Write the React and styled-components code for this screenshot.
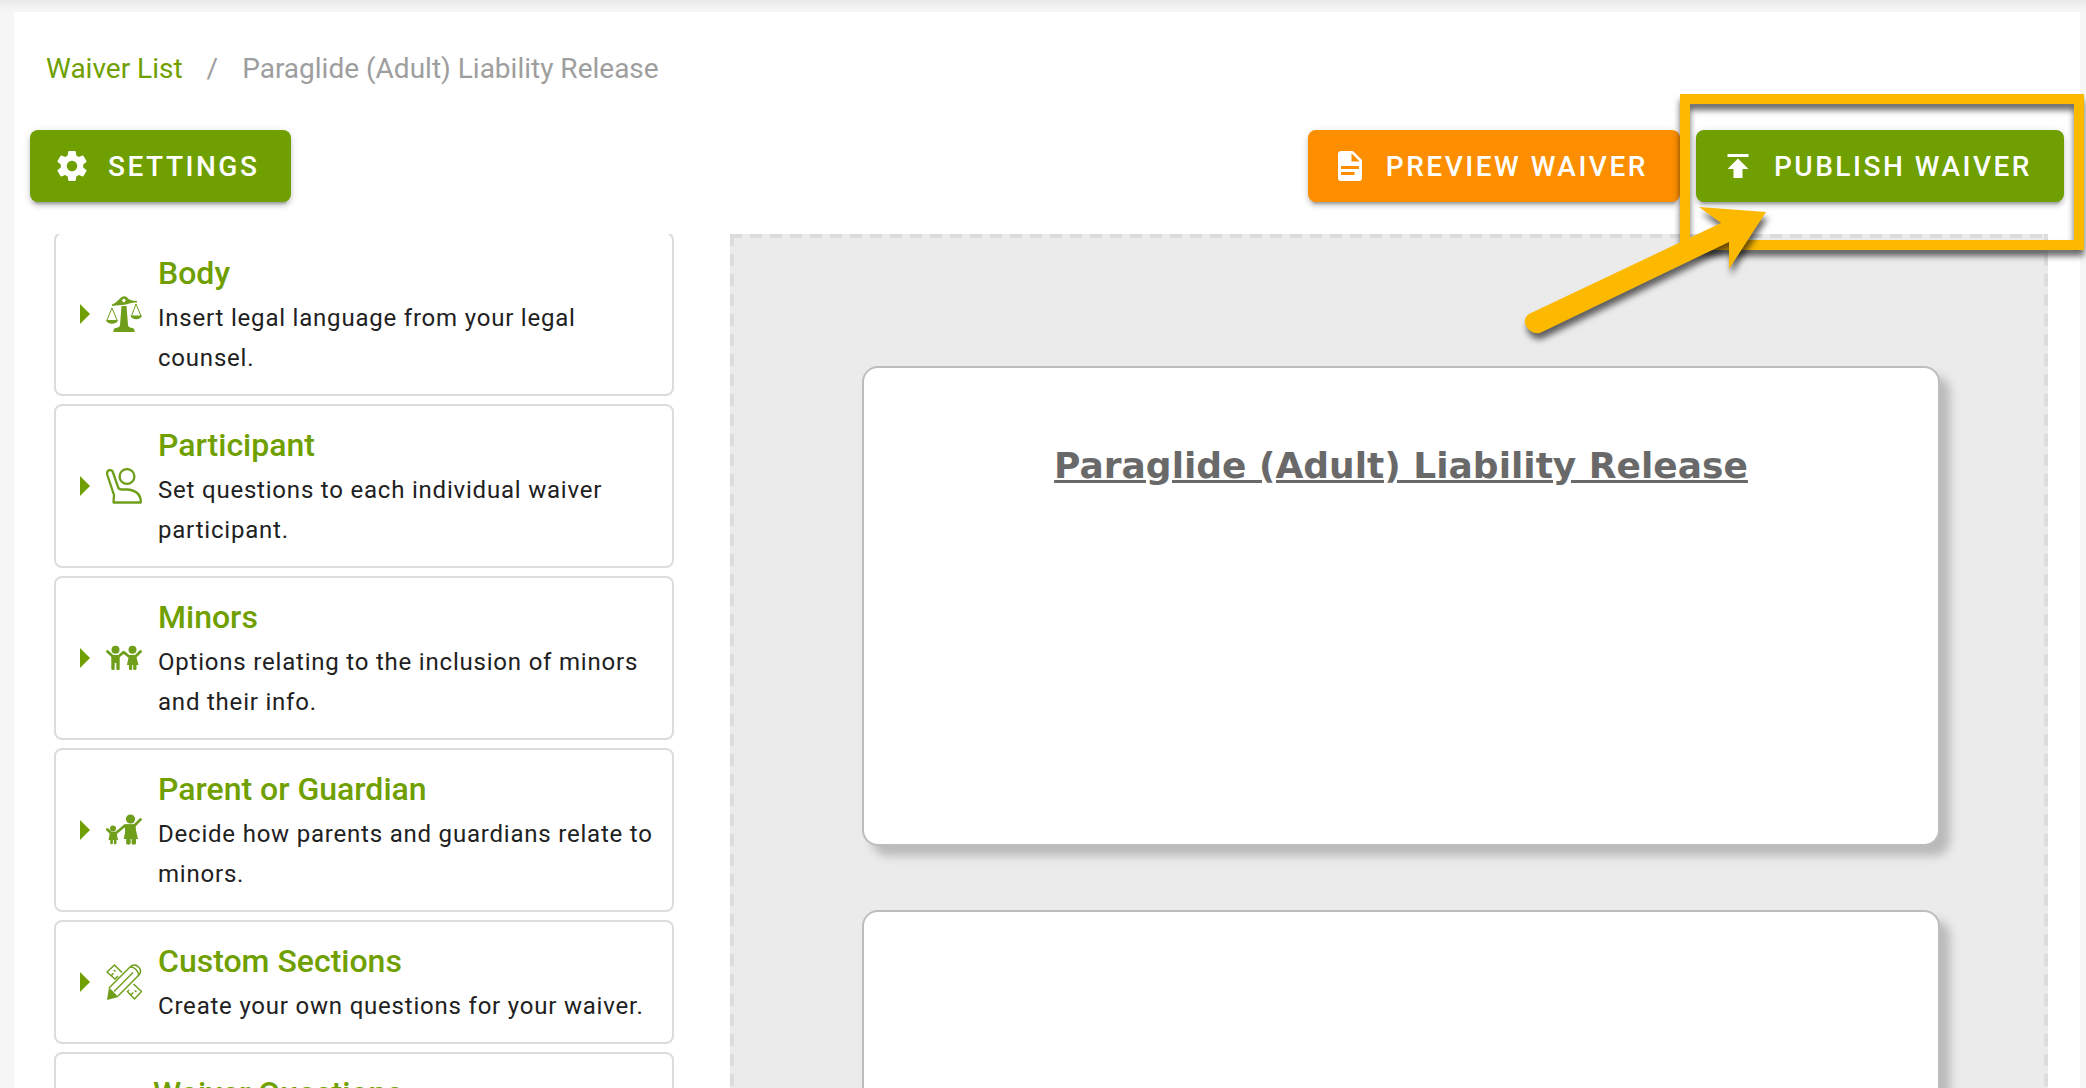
import React from "react";
import styled, { createGlobalStyle } from "styled-components";

const GREEN = "#6f9f00";
const ICON_GREEN = "#6f9e1b";
const AMBER = "#fcb900";

const GlobalStyle = createGlobalStyle`
  *, *::before, *::after { box-sizing: border-box; }
  html, body, #root { height: 100%; }
  body {
    margin: 0;
    overflow: hidden;
    background: #f6f6f6;
    color: #212121;
    font-family: Roboto, "Liberation Sans", sans-serif;
  }
  h1, h2, p, ol, ul { margin: 0; padding: 0; font-weight: 400; }
`;

const Shell = styled.div`
  height: 100%;
  padding: 12px 6px 0 14px;
  background: linear-gradient(#e8e8e8, #f6f6f6 10px);
`;

const Panel = styled.main`
  height: 100%;
  display: flex;
  flex-direction: column;
  background: #fff;
`;

const Breadcrumbs = styled.nav`
  padding: 37px 32px 0;

  ol {
    display: flex;
    gap: 24px;
    list-style: none;
    font-size: 28px;
    line-height: 40px;
    color: #9e9e9e;
  }
  a {
    color: ${GREEN};
    text-decoration: none;
  }
`;

const Toolbar = styled.div`
  display: flex;
  gap: 16px;
  padding: 41px 16px 32px;
`;

const Spacer = styled.div`
  flex: 1;
`;

const Button = styled.button`
  display: flex;
  align-items: center;
  gap: 18px;
  height: 72px;
  padding: 0 32px 0 24px;
  border: 0;
  border-radius: 8px;
  background: ${(p) => p.$color};
  color: #fff;
  font: 500 28px/40px Roboto, "Liberation Sans", sans-serif;
  letter-spacing: 0.09em;
  text-transform: uppercase;
  cursor: pointer;
  box-shadow: 0 6px 2px -4px rgba(0, 0, 0, 0.2), 0 4px 4px rgba(0, 0, 0, 0.14),
    0 2px 10px rgba(0, 0, 0, 0.12);

  svg {
    width: 36px;
    height: 36px;
    fill: currentColor;
  }
`;

const ButtonLabel = styled.span`
  padding-top: 2px;
`;

const Workspace = styled.div`
  flex: 1;
  min-height: 0;
  display: flex;
  gap: 56px;
  padding: 0 32px 0 40px;
`;

const Sections = styled.ul`
  flex: 0 0 620px;
  display: flex;
  flex-direction: column;
  justify-content: flex-start;
  gap: 8px;
  overflow: hidden;
  list-style: none;
`;

const SectionCard = styled.li`
  flex: none;
  border: 2px solid #dcdcdc;
  border-radius: 8px;
  ${(p) => p.$scrolled && "margin-top: -2px;"}
`;

const SectionToggle = styled.button`
  display: flex;
  align-items: center;
  gap: 16px;
  width: 100%;
  padding: 16px 16px 16px 24px;
  border: 0;
  background: none;
  color: inherit;
  font: inherit;
  text-align: left;
  cursor: pointer;
`;

const Caret = styled.span`
  flex: none;
  border: solid transparent;
  border-width: 10px 0 10px 10px;
  border-left-color: ${GREEN};
`;

const SectionIcon = styled.svg`
  flex: none;
  width: ${(p) => p.$size}px;
  height: ${(p) => p.$size}px;
  fill: ${ICON_GREEN};
  stroke: ${ICON_GREEN};
  stroke-width: 0;
`;

const SectionTitle = styled.span`
  display: block;
  padding-bottom: 2px;
  color: ${GREEN};
  font-size: 32px;
  font-weight: 500;
  line-height: 46px;
`;

const SectionText = styled.span`
  display: block;
  font-size: 24px;
  line-height: 40px;
  letter-spacing: 0.033em;
`;

const dashX = "repeating-linear-gradient(90deg, #dcdcdc 0 12px, transparent 12px 20px)";
const dashY = "repeating-linear-gradient(#dcdcdc 0 12px, transparent 12px 20px)";

const Preview = styled.section`
  flex: 1;
  min-width: 0;
  display: flex;
  flex-direction: column;
  gap: 64px;
  padding: 132px 108px 0 132px;
  overflow: hidden;
  background: ${dashX} top / 100% 4px no-repeat, ${dashY} left / 4px 100% no-repeat,
    ${dashY} right / 4px 100% no-repeat, #ebebeb;
`;

const Sheet = styled.article`
  flex: none;
  height: 480px;
  padding: 74px 32px;
  border: 2px solid #bdbdbd;
  border-radius: 16px;
  background: #fff;
  box-shadow: 10px 10px 10px #bababa;
`;

const SheetTitle = styled.h1`
  color: #696969;
  font: 700 36px/48px "DejaVu Sans", Verdana, sans-serif;
  text-align: center;
  text-decoration: underline;
`;

const Highlighted = styled.div`
  position: relative;
`;

const HighlightFrame = styled.span`
  position: absolute;
  inset: -36px -20px -48px -16px;
  border: 10px solid ${AMBER};
  filter: drop-shadow(0 6px 3px rgba(0, 0, 0, 0.6));
  pointer-events: none;
`;

const Arrow = styled.svg`
  position: absolute;
  top: 70px;
  left: -180px;
  width: 260px;
  height: 150px;
  fill: ${AMBER};
  filter: drop-shadow(2px 6px 3px rgba(0, 0, 0, 0.6));
  pointer-events: none;
`;

const icons = {
  scales: (
    <>
      <path d="M15.5 10h5l1.5 19c.2 2 1.500 2.500 4 3 2 .4 2.500 1 2.500 3v1h-21v-1c0-2 .5-2.600 2.500-3 2.500-.5 3.800-1 4-3z" />
      <path fillRule="evenodd" d="M6 8.500c3-1 5-3 8-6 3-3.200 6-3 8 0 1.500 1.800 4.500 2 9 2.500v1.500c-5-.5-7 .8-11 2-5 1-9 .5-14 1.500zM17.800 2.800a1.700 1.700 0 1 0 .1 0z" />
      <path d="M0 24h12c-1 5-11 5-12 0zM24.500 19.500h11.500c-1 5-10.500 5-11.500 0z" />
      <path fill="none" strokeWidth="1" d="M1 24 6 12l5 12M25.500 20 30 8l5 12" />
    </>
  ),
  person: (
    <g fill="none" strokeWidth="2.300" strokeLinejoin="round">
      <circle cx="21" cy="8.500" r="7.400" />
      <path d="M7.500 34.500 8 27 1.200 6.500C.2 1.500 6 .8 6.800 4l5.400 15.500c.5 1.500 2 2 4 2h5.600C30 22.500 35 27 34.800 34.500z" />
    </g>
  ),
  children: (
    <>
      <circle cx="9.500" cy="9.800" r="4" />
      <circle cx="26.500" cy="9.800" r="4" />
      <path
        fill="none"
        strokeWidth="2.800"
        strokeLinecap="round"
        strokeLinejoin="round"
        d="M1.500 11.500 7 16.500h5.500l5-4.300 5.500 4.300h6.500l5-5"
      />
      <path d="M5.300 15.500h8.400V29c0 1.300-3.400 1.300-3.400 0v-6h-1.600v6c0 1.300-3.400 1.300-3.400 0zM23 15.500h7l2.500 9.500h-2V29c0 1.300-3.300 1.300-3.300 0v-4h-1V29c0 1.300-3.300 1.300-3.300 0v-4h-2z" />
    </>
  ),
  parent: (
    <>
      <circle cx="24.500" cy="7" r="4.600" />
      <circle cx="7" cy="16.500" r="3" />
      <path
        fill="none"
        strokeWidth="2.700"
        strokeLinecap="round"
        strokeLinejoin="round"
        d="M1.400 17.500 5 21h5l9-7.500h9.500L34.500 7.500"
      />
      <path d="M18.500 12.500h11l.5 6 2 8.500h-2v4.500c0 1.500-4.400 1.500-4.400 0V27h-1v4.500c0 1.500-4.400 1.500-4.400 0V27h-2.500l1.500-7.500zM4 20.500h6.500l1.500 7.500h-1.500v3.500c0 1-2.600 1-2.600 0V28h-1v3.500c0 1-2.600 1-2.600 0V28H2.500z" />
    </>
  ),
  tools: (
    <>
      <g fill="none" strokeWidth="1.500" strokeLinejoin="round">
        <path d="M9.500 15.500 1 8l7.500-7L16 8.500M5 11.800l2.500-2.500M9 15l3-3M9.500 7.500l-1.800-1.500M21 27l7.500 8 7-7.500-8-7.500M24.500 31l2.800-2.500M21.500 27.500l1.500-1.500M30.500 28l-2-1.500" />
        <path d="m3 24 21-21c3-3 6-2.500 8.500 0s3 5.500 0 8.500L12 32M24.500 3c4 0 8 4 8 8.500" />
        <path d="M8 27.500 27 8.500" />
      </g>
      <path d="M3 23.500 12.500 33 1 36z" />
    </>
  ),
};

const sections = [
  { title: "Body", text: "Insert legal language from your legal counsel.", icon: "scales", size: 36 },
  { title: "Participant", text: "Set questions to each individual waiver participant.", icon: "person", size: 36 },
  { title: "Minors", text: "Options relating to the inclusion of minors and their info.", icon: "children", size: 36 },
  { title: "Parent or Guardian", text: "Decide how parents and guardians relate to minors.", icon: "parent", size: 36 },
  { title: "Custom Sections", text: "Create your own questions for your waiver.", icon: "tools", size: 36 },
  { title: "Waiver Questions", text: "", icon: null, size: 31 },
];

function GearIcon() {
  return (
    <svg viewBox="0 0 24 24" aria-hidden="true">
      <path d="M12 15.500A3.500 3.500 0 0 1 8.500 12 3.500 3.500 0 0 1 12 8.500a3.500 3.500 0 0 1 3.500 3.500 3.500 3.500 0 0 1-3.500 3.500m7.430-2.530c.04-.32.07-.64.07-.97s-.03-.66-.07-1l2.110-1.630c.19-.15.24-.42.12-.64l-2-3.460c-.12-.22-.39-.31-.61-.22l-2.490 1c-.52-.39-1.060-.73-1.690-.98l-.37-2.650A.506.506 0 0 0 14 2h-4c-.25 0-.46.18-.5.42l-.37 2.650c-.63.25-1.170.59-1.690.98l-2.490-1c-.22-.09-.49 0-.61.22l-2 3.460c-.13.22-.07.49.12.64L4.570 11c-.04.34-.07.67-.07 1s.03.65.07.97l-2.110 1.660c-.19.15-.25.42-.12.64l2 3.460c.12.22.39.3.61.22l2.490-1.010c.52.4 1.060.74 1.690.99l.37 2.650c.04.24.25.42.5.42h4c.25 0 .46-.18.5-.42l.37-2.650c.63-.26 1.170-.59 1.690-.99l2.490 1.010c.22.08.49 0 .61-.22l2-3.460c.12-.22.07-.49-.12-.64z" />
    </svg>
  );
}

function DocumentIcon() {
  return (
    <svg viewBox="0 0 24 24" aria-hidden="true">
      <path d="M13 9h5.500L13 3.500V9M6 2h8l6 6v12a2 2 0 0 1-2 2H6a2 2 0 0 1-2-2V4c0-1.110.89-2 2-2m9 16v-2H6v2h9m3-4v-2H6v2h12z" />
    </svg>
  );
}

function PublishIcon() {
  return (
    <svg viewBox="0 0 24 24" aria-hidden="true">
      <path d="M5 4v2h14V4H5m0 10h4v6h6v-6h4l-7-7-7 7z" />
    </svg>
  );
}

export default function App() {
  return (
    <>
      <GlobalStyle />
      <Shell>
        <Panel>
          <Breadcrumbs aria-label="Breadcrumb">
            <ol>
              <li>
                <a href="#waivers">Waiver List</a>
              </li>
              <li aria-hidden="true">/</li>
              <li>Paraglide (Adult) Liability Release</li>
            </ol>
          </Breadcrumbs>
          <Toolbar>
            <Button $color={GREEN}>
              <GearIcon />
              <ButtonLabel>Settings</ButtonLabel>
            </Button>
            <Spacer />
            <Button $color="#fc8e00">
              <DocumentIcon />
              <ButtonLabel>Preview Waiver</ButtonLabel>
            </Button>
            <Highlighted>
              <Button $color={GREEN}>
                <PublishIcon />
                <ButtonLabel>Publish Waiver</ButtonLabel>
              </Button>
              <HighlightFrame />
              <Arrow viewBox="0 0 260 150" aria-hidden="true">
                <path d="M183 7 250 12 213 69V42L26 132C17 137 5 125 10 117Q12 114 15 113L205 23Z" />
              </Arrow>
            </Highlighted>
          </Toolbar>
          <Workspace>
            <Sections>
              {sections.map((s, i) => (
                <SectionCard key={s.title} $scrolled={i === 0}>
                  <SectionToggle>
                    <Caret />
                    <SectionIcon $size={s.size} viewBox="0 0 36 36" aria-hidden="true">
                      {s.icon && icons[s.icon]}
                    </SectionIcon>
                    <span>
                      <SectionTitle>{s.title}</SectionTitle>
                      <SectionText>{s.text || "\u00a0"}</SectionText>
                    </span>
                  </SectionToggle>
                </SectionCard>
              ))}
            </Sections>
            <Preview>
              <Sheet>
                <SheetTitle>Paraglide (Adult) Liability Release</SheetTitle>
              </Sheet>
              <Sheet />
            </Preview>
          </Workspace>
        </Panel>
      </Shell>
    </>
  );
}
